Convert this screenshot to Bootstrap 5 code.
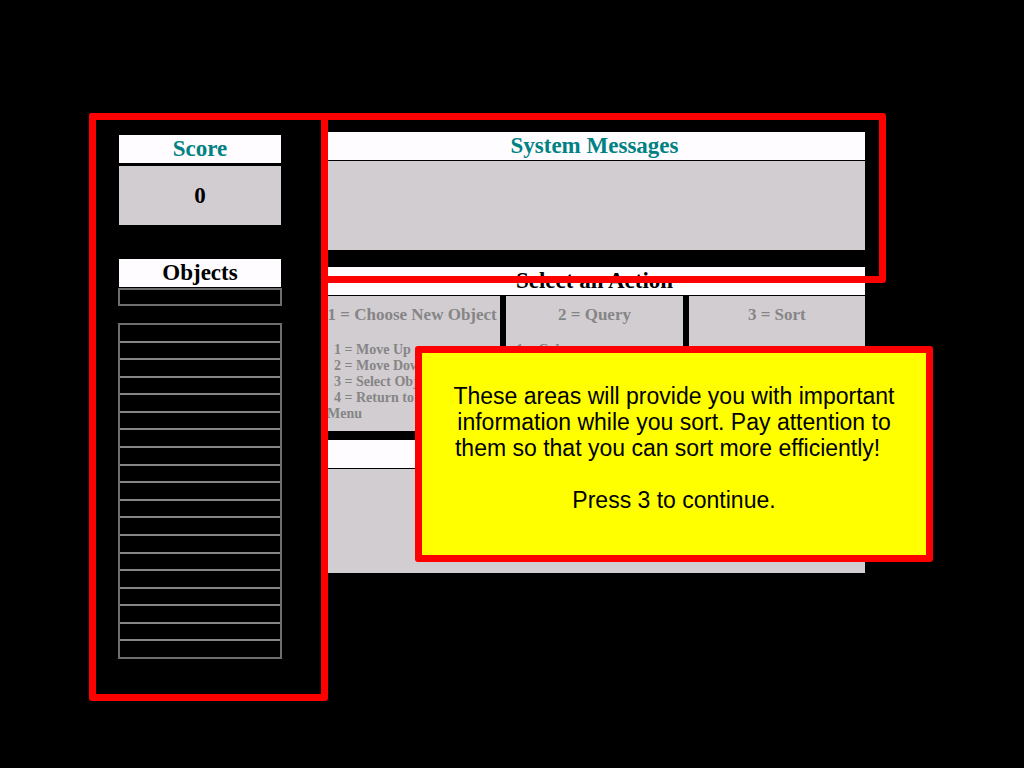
<!DOCTYPE html>
<html lang="en">
<head>
<meta charset="utf-8">
<meta name="viewport" content="width=device-width, initial-scale=1">
<title>Sorting Task</title>
<link href="https://cdn.jsdelivr.net/npm/bootstrap@5.3.0/dist/css/bootstrap.min.css" rel="stylesheet">
<script src="https://cdn.jsdelivr.net/npm/bootstrap@5.3.0/dist/js/bootstrap.bundle.min.js" defer></script>
<style>
  body { background: #000; color: #000; font-family: "Liberation Serif", serif; font-weight: 700; }
  .stage { padding: 113px 92px 0 89px; }
  .red-frame { border: 7px solid #f00; border-radius: 3px; }
  .sidebar { width: 239px; height: 588px; flex: none; z-index: 2; padding: 15px 40px 0 23px; background: #000; }
  .board { margin-left: -4px; margin-right: 67px; padding-top: 19px; min-width: 0; }
  .bar-title { background: #fffcff; height: 28px; line-height: 27px; font-size: 23px; font-weight: 700; margin: 0; text-align: center; }
  .sidebar .bar-title { line-height: 28px; }
  .teal-text { color: #008284; }
  .pane { background: #d2cdd1; }
  .score-pane { height: 59px; margin-top: 3px; padding-top: 2px; font-size: 23px; }
  .sidebar .objects-title { margin-top: 34px; }
  .slot-list { border: 2px solid #6e6e6e; margin: 0 -1px; }
  .slot-list li + li { border-top: 2px solid #858585; }
  .current-slot { height: 18px; margin-top: 1px; }
  .all-slots { height: 336px; margin-top: 17px; }
  .messages { height: 89px; margin-top: 1px; }
  .actions { margin-top: 17px; }
  .choices { display: grid; grid-template-columns: repeat(3, 1fr); gap: 6px; margin-top: 1px; }
  .choice { height: 135px; color: #868586; padding: 9px 3px 0; font-size: 14px; line-height: 16px; overflow: hidden; }
  .choice h3 { font-size: 17px; line-height: 20px; font-weight: 700; margin: 0 0 17px; text-align: center; white-space: nowrap; }
  .choice p { margin: 0; text-indent: 7px; }
  .details { margin-top: 9px; }
  .detail-pane { height: 104px; margin-top: 1px; }
  .top-frame { top: 113px; left: 89px; right: 138px; height: 170px; z-index: 1; }
  .notice { top: 346px; left: 415px; right: 91px; height: 216px; z-index: 3; background: #ff0; padding: 30px 20px 0; text-align: center; font: 400 23px/26px "Liberation Sans", sans-serif; }
</style>
</head>
<body>
<main class="stage position-relative d-flex">
  <aside class="sidebar red-frame position-relative">
    <h2 class="bar-title teal-text">Score</h2>
    <div class="pane score-pane d-flex align-items-center justify-content-center">0</div>
    <h2 class="bar-title objects-title">Objects</h2>
    <ul class="slot-list current-slot list-unstyled"><li></li></ul>
    <ul class="slot-list all-slots list-unstyled d-flex flex-column">
      <li class="flex-fill"></li><li class="flex-fill"></li><li class="flex-fill"></li><li class="flex-fill"></li><li class="flex-fill"></li>
      <li class="flex-fill"></li><li class="flex-fill"></li><li class="flex-fill"></li><li class="flex-fill"></li><li class="flex-fill"></li>
      <li class="flex-fill"></li><li class="flex-fill"></li><li class="flex-fill"></li><li class="flex-fill"></li><li class="flex-fill"></li>
      <li class="flex-fill"></li><li class="flex-fill"></li><li class="flex-fill"></li><li class="flex-fill"></li>
    </ul>
  </aside>
  <div class="board flex-grow-1">
    <section>
      <h2 class="bar-title teal-text">System Messages</h2>
      <div class="pane messages"></div>
    </section>
    <section class="actions">
      <h2 class="bar-title">Select an Action</h2>
      <div class="choices">
        <div class="pane choice">
          <h3>1 = Choose New Object</h3>
          <p>1 = Move Up</p><p>2 = Move Down</p><p>3 = Select Object</p><p>4 = Return to<br>Menu</p>
        </div>
        <div class="pane choice">
          <h3>2 = Query</h3>
          <p>1 = Color</p>
        </div>
        <div class="pane choice"><h3>3 = Sort</h3></div>
      </div>
    </section>
    <section class="details">
      <div class="bar-title"></div>
      <div class="pane detail-pane"></div>
    </section>
  </div>
  <div class="top-frame red-frame position-absolute"></div>
  <div class="notice red-frame position-absolute" role="dialog" aria-label="Instructions">
    These areas will provide you with important<br>information while you sort. Pay attention to<br>them so that you can sort more efficiently!&nbsp;&nbsp;<br><br>Press 3 to continue.
  </div>
</main>
</body>
</html>
